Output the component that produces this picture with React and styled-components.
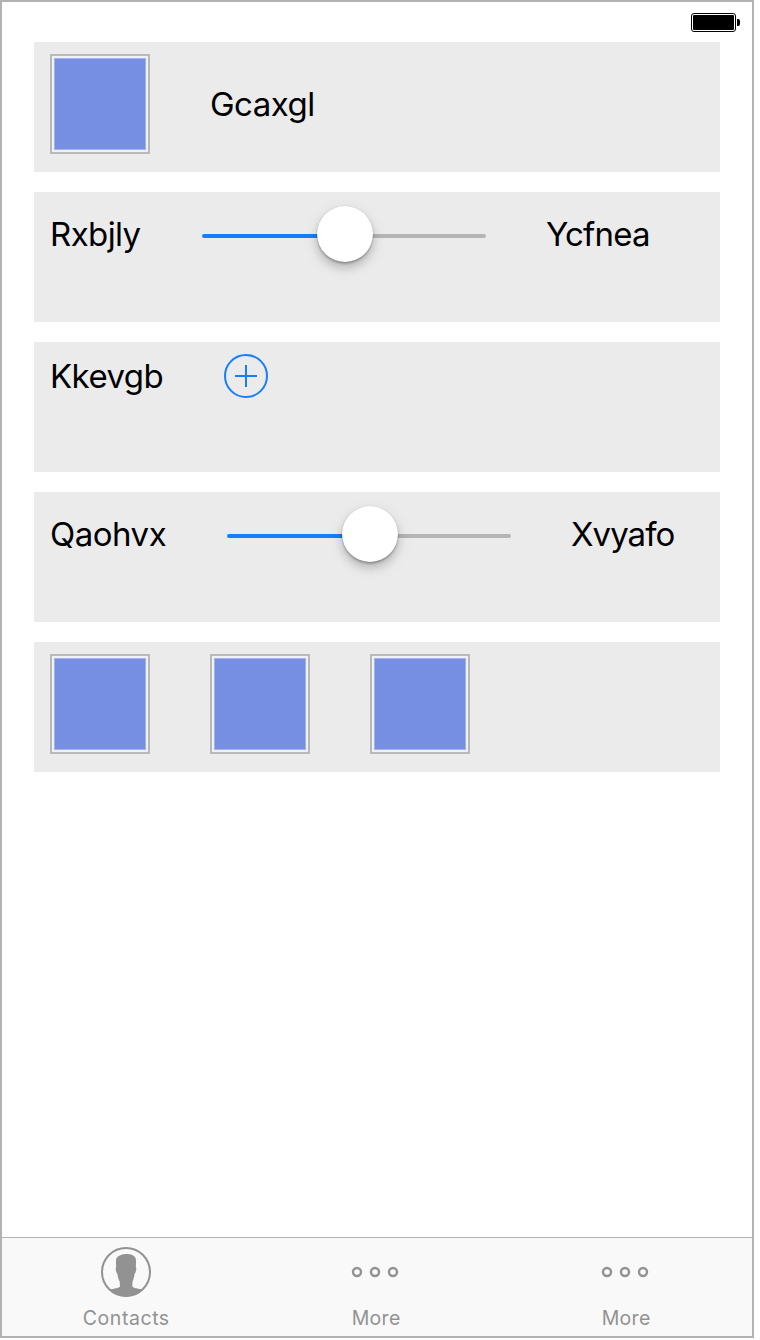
import React from "react";
import styled, { createGlobalStyle } from "styled-components";

const GlobalStyle = createGlobalStyle`
  body { margin: 0; background: #fff; }
  *, *::before, *::after { box-sizing: border-box; }
`;

const Screen = styled.div`
  display: flex;
  flex-direction: column;
  width: 754px;
  height: 1338px;
  border: 2px solid #b2b2b2;
  background: #fff;
  font-family: Inter, "Liberation Sans", sans-serif;
  color: #000;
`;

const StatusBar = styled.header`
  display: flex;
  justify-content: flex-end;
  height: 40px;
  padding: 11px 12px 0 0;

  svg { display: block; }
`;

const Content = styled.main`
  display: flex;
  flex: 1;
  flex-direction: column;
  gap: 20px;
  padding: 0 32px;
`;

const Card = styled.section`
  display: flex;
  align-items: flex-start;
  height: 130px;
  padding: 12px 16px;
  background: #ebebeb;
`;

const CardLine = styled.div`
  display: flex;
  align-items: center;
  gap: 60px;
`;

const Label = styled.span`
  flex: none;
  width: ${(p) => p.$width}px;
  font-size: 33px;
  line-height: 40px;
  letter-spacing: ${(p) => p.$tracking ?? 0}px;
  white-space: nowrap;
`;

const Swatch = styled.div`
  width: 100px;
  height: 100px;
  padding: 2px;
  border: 2px solid #b9b9b9;
  background: #eff1f8;

  &::before {
    content: "";
    display: block;
    height: 100%;
    border: 1px solid #a3b4ec;
    background: #768fe2;
  }
`;

const Track = styled.div`
  display: flex;
  align-items: center;
  justify-content: center;
  position: relative;
  width: 284px;
  height: 60px;
  padding-left: 2px;

  &::before {
    content: "";
    position: absolute;
    inset: 30px 0 auto;
    height: 4px;
    border-radius: 2px;
    background: linear-gradient(90deg, #147efb 50%, #b5b5b5 50%);
  }
`;

const Thumb = styled.div`
  position: relative;
  width: 56px;
  height: 56px;
  border-radius: 50%;
  background: #fff;
  box-shadow: 0 0 1px rgba(0, 0, 0, 0.2), 0 2px 2px rgba(0, 0, 0, 0.22),
    0 6px 8px rgba(0, 0, 0, 0.15), 0 5px 16px rgba(0, 0, 0, 0.1);
`;

const AddButton = styled.button`
  width: 44px;
  height: 44px;
  padding: 0;
  border: 0;
  background: none;

  svg { display: block; }
`;

const TabBar = styled.nav`
  display: grid;
  grid-template-columns: repeat(3, 250px);
  height: 99px;
  border-top: 1px solid #b2b2b2;
  background: #f9f9f9;
  color: #929292;
`;

const Tab = styled.div`
  display: flex;
  flex-direction: column;
  align-items: center;
  padding: 9px 2px 0 0;

  svg { display: block; }
`;

const TabLabel = styled.span`
  margin-top: 9px;
  font-size: 19.5px;
  line-height: 24px;
  letter-spacing: ${(p) => p.$tracking}px;
  margin-right: -${(p) => p.$tracking}px;
`;

const Battery = () => (
  <svg width="49" height="19" viewBox="0 0 49 19">
    <rect x="0.5" y="0.5" width="44" height="18" rx="2.5" fill="#fff" stroke="#000" />
    <rect x="2" y="2" width="41" height="15" rx="1" />
    <path d="M46 6h1a2 2 0 0 1 2 2v3a2 2 0 0 1-2 2h-1z" />
  </svg>
);

const PlusIcon = () => (
  <svg width="44" height="44" viewBox="0 0 44 44" fill="none" stroke="#147efb" strokeWidth="2">
    <circle cx="22" cy="22" r="21" />
    <path d="M22 11v22M11 22h22" />
  </svg>
);

const ContactIcon = () => (
  <svg width="50" height="50" viewBox="0 0 50 50" fill="currentColor">
    <circle cx="25" cy="25" r="24" fill="none" stroke="currentColor" strokeWidth="2" />
    <path d="M25 7C30 7 33.800 8.300 34.700 11.500C35.300 14 35 17 34.800 20C35.600 20.500 35.300 23.500 34.500 25.500C34.100 26.300 33.700 26.300 33.500 27.500C33 31 32.300 33 31.500 34.500L31.300 39.500C32.300 41 37 41.700 41.500 42.600C37 47.500 31 49.500 25 49.500C19 49.500 13 47.500 8.500 42.600C13 41.700 18 41 19 39.500L18.700 34.500C17.700 33 17 31 16.500 27.500C16.200 26.300 15.800 26.300 15.500 25.500C14.700 23.500 14.400 20.500 15.200 20C15 17 14.700 14 15.300 11.500C17 8.500 21 7 25 7Z" />
  </svg>
);

const MoreIcon = () => (
  <svg width="50" height="50" viewBox="0 0 50 50" fill="none" stroke="currentColor" strokeWidth="2.4">
    <circle cx="6" cy="25" r="4" />
    <circle cx="24" cy="25" r="4" />
    <circle cx="42" cy="25" r="4" />
  </svg>
);

const Slider = () => (
  <Track>
    <Thumb />
  </Track>
);

export default function App() {
  return (
    <>
      <GlobalStyle />
      <Screen>
        <StatusBar>
          <Battery />
        </StatusBar>
        <Content>
          <Card>
            <CardLine>
              <Swatch />
              <Label $width={106} $tracking={-0.5}>Gcaxgl</Label>
            </CardLine>
          </Card>
          <Card>
            <CardLine>
              <Label $width={92} $tracking={-0.6}>Rxbjly</Label>
              <Slider />
              <Label $width={105} $tracking={-0.8}>Ycfnea</Label>
            </CardLine>
          </Card>
          <Card>
            <CardLine>
              <Label $width={114} $tracking={-0.55}>Kkevgb</Label>
              <AddButton aria-label="Add">
                <PlusIcon />
              </AddButton>
            </CardLine>
          </Card>
          <Card>
            <CardLine>
              <Label $width={117} $tracking={-0.5}>Qaohvx</Label>
              <Slider />
              <Label $width={105} $tracking={-0.95}>Xvyafo</Label>
            </CardLine>
          </Card>
          <Card>
            <CardLine>
              <Swatch />
              <Swatch />
              <Swatch />
            </CardLine>
          </Card>
        </Content>
        <TabBar>
          <Tab>
            <ContactIcon />
            <TabLabel $tracking={0.55}>Contacts</TabLabel>
          </Tab>
          <Tab>
            <MoreIcon />
            <TabLabel $tracking={0.3}>More</TabLabel>
          </Tab>
          <Tab>
            <MoreIcon />
            <TabLabel $tracking={0.3}>More</TabLabel>
          </Tab>
        </TabBar>
      </Screen>
    </>
  );
}
